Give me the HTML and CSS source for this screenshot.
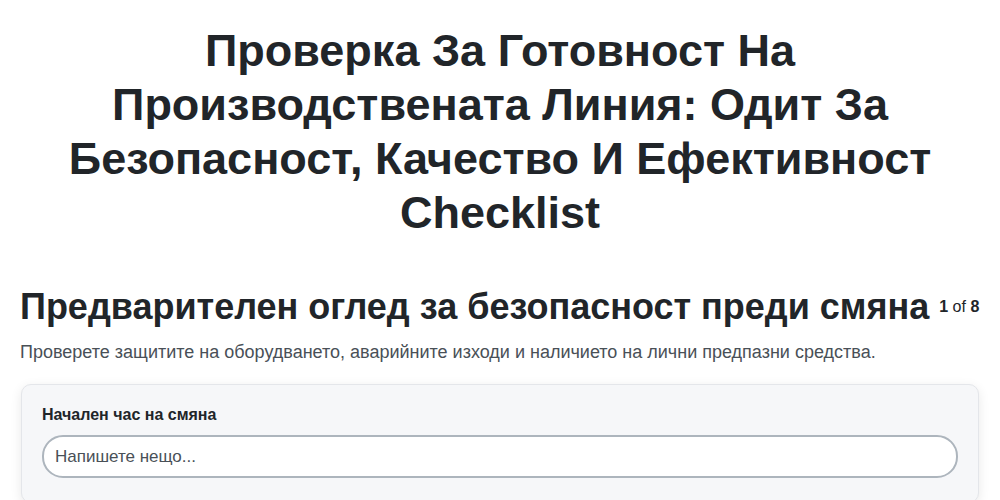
FILE: index.html
```html
<!DOCTYPE html>
<html lang="bg">
<head>
    <meta charset="UTF-8">
    <meta name="viewport" content="width=device-width, initial-scale=1.0">
    <title>Checklist</title>
    <link rel="stylesheet" href="styles.css">
</head>
<body>
    <div class="page">
        <h1 class="title">Проверка За Готовност На Производствената Линия: Одит За Безопасност, Качество И Ефективност Checklist</h1>
        <div class="section-head">
            <h2>Предварителен оглед за безопасност преди смяна</h2>
            <div class="counter"><strong>1</strong> of <strong>8</strong></div>
        </div>
        <p class="desc">Проверете защитите на оборудването, аварийните изходи и наличието на лични предпазни средства.</p>
        <div class="card">
            <label class="field-label" for="start">Начален час на смяна</label>
            <input class="field" id="start" type="text" placeholder="Напишете нещо...">
        </div>
    </div>
</body>
</html>
```

FILE: styles.css
```css
body {
    font-family: "Liberation Sans", Arial, sans-serif;
    background-color: #fff;
    color: #212529;
    margin: 0;
    padding: 0;
}
.page {
    padding: 24px 20px 0;
}
.title {
    font-size: 45px;
    line-height: 54px;
    font-weight: bold;
    text-align: center;
    margin: 0 0 47px;
}
.section-head {
    display: flex;
    align-items: flex-start;
    gap: 10px;
}
.section-head h2 {
    font-size: 36px;
    line-height: 40px;
    margin: 0;
    white-space: nowrap;
}
.counter {
    font-size: 16px;
    line-height: 18px;
    margin-top: 11px;
    white-space: nowrap;
}
.desc {
    font-size: 18px;
    line-height: 22px;
    color: #495057;
    margin: 14px 0 21px;
}
.card {
    background-color: #f6f7f9;
    border: 1px solid #e4e6ea;
    border-radius: 10px;
    box-shadow: 0 3px 12px rgba(0, 0, 0, 0.09);
    margin: 0 1px;
    padding: 20px 20px 24px;
}
.field-label {
    display: block;
    font-size: 16px;
    line-height: 19px;
    font-weight: bold;
    margin-bottom: 11px;
}
.field {
    display: block;
    width: 100%;
    box-sizing: border-box;
    height: 43px;
    border: 2px solid #adb5bd;
    border-radius: 21px;
    padding: 0 11px;
    font-family: inherit;
    font-size: 17px;
    color: #212529;
    background-color: #fff;
}
.field::placeholder {
    color: #495057;
}
```
